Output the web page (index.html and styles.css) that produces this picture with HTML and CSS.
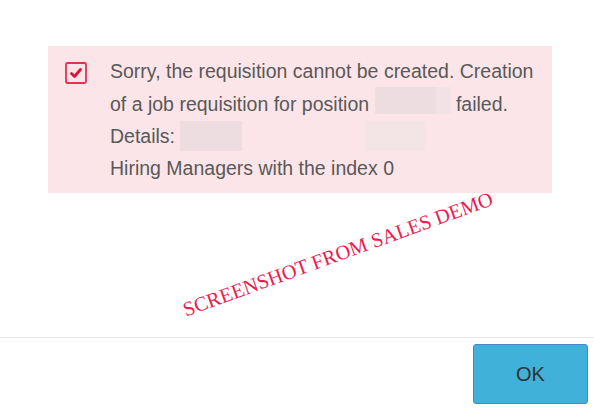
FILE: index.html
```html
<!DOCTYPE html>
<html lang="en">
<head>
    <meta charset="UTF-8">
    <meta name="viewport" content="width=device-width, initial-scale=1.0">
    <title>Requisition Error</title>
    <link rel="stylesheet" href="styles.css">
</head>
<body>
    <div class="dialog">
        <div class="dialog-body">
            <!-- Error message -->
            <div class="alert">
                <div class="alert-icon">
                    <svg width="22" height="22" viewBox="0 0 22 22">
                        <rect x="1" y="1" width="20" height="20" rx="1.5" fill="none" stroke="#e0334f" stroke-width="1.8"/>
                        <path d="M6.5 11.5 L9.5 14.5 L15.5 7.5" fill="none" stroke="#d8173f" stroke-width="2.8" stroke-linecap="round" stroke-linejoin="round"/>
                    </svg>
                </div>
                <div class="alert-text">
                    Sorry, the requisition cannot be created. Creation<br>
                    of a job requisition for position <span class="masked masked-pos"></span> failed.<br>
                    Details: <span class="masked masked-detail"></span><span class="masked masked-faint"></span><br>
                    Hiring Managers with the index 0
                </div>
            </div>
        </div>
        <div class="dialog-footer">
            <button class="btn">OK</button>
        </div>
    </div>
    <div class="watermark">SCREENSHOT FROM SALES DEMO</div>
</body>
</html>
```
FILE: styles.css
```css
body {
    font-family: "Liberation Sans", Arial, sans-serif;
    margin: 0;
    background-color: #fff;
    width: 594px;
    height: 408px;
    overflow: hidden;
    position: relative;
}
.dialog-body {
    height: 337px;
    padding: 46px 42px 0 48px;
    box-sizing: border-box;
}
.alert {
    display: flex;
    background-color: #fce5e8;
    height: 147px;
    padding: 16px 0 0 17px;
    box-sizing: border-box;
}
.alert-icon {
    width: 22px;
    height: 22px;
    margin-right: 23px;
}
.alert-text {
    color: #595959;
    font-size: 19.5px;
    line-height: 32px;
    margin-top: -7px;
    white-space: nowrap;
}
.masked {
    display: inline-block;
    height: 30px;
    vertical-align: -8px;
    background-color: #eedde0;
}
.masked-pos {
    width: 76px;
    height: 27px;
    vertical-align: -3px;
    background: linear-gradient(to right, #eedde0 80%, #f2e2e5 80%);
}
.masked-detail {
    width: 62px;
}
.masked-faint {
    width: 61px;
    margin-left: 123px;
    background-color: #f3e4e6;
}
.dialog-footer {
    border-top: 1px solid #e9e9e9;
    display: flex;
    justify-content: flex-end;
    padding: 6px 6px 0 0;
}
.btn {
    width: 115px;
    height: 60px;
    background-color: #40b1d8;
    border: 1px solid #4a86cf;
    border-radius: 3px;
    color: #333;
    font-family: "Liberation Sans", Arial, sans-serif;
    font-size: 20px;
    cursor: pointer;
}
.watermark {
    position: absolute;
    left: 168px;
    top: 243px;
    width: 340px;
    text-align: center;
    font-family: "Liberation Serif", "Times New Roman", serif;
    font-size: 20.5px;
    color: #ec1c51;
    transform: rotate(-20deg);
    white-space: nowrap;
}
```
